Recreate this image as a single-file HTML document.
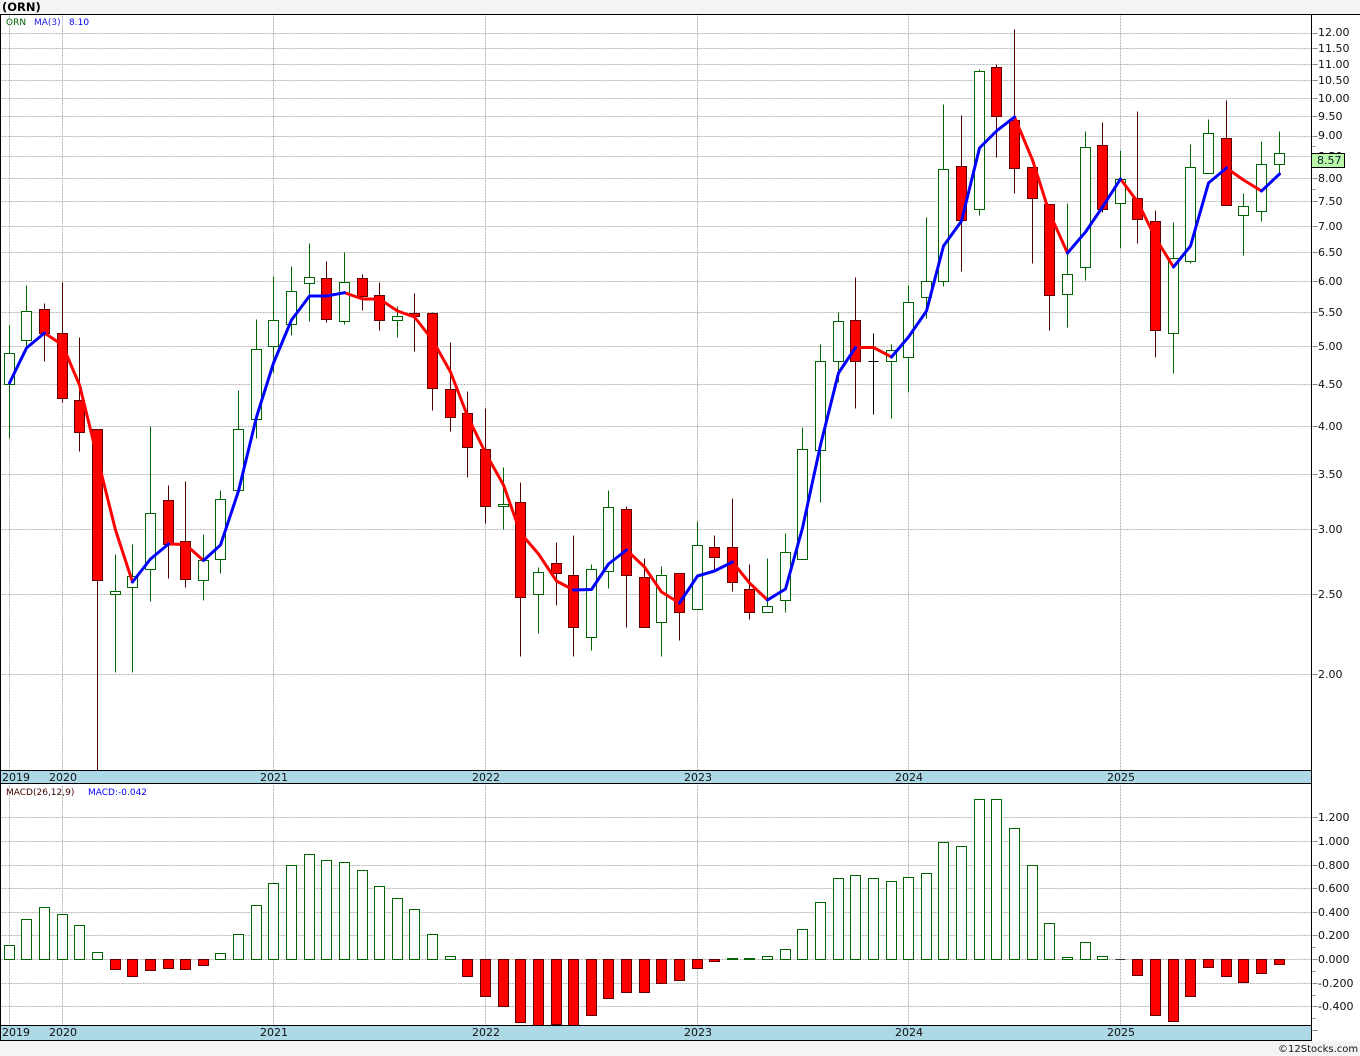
<!DOCTYPE html>
<html><head><meta charset="utf-8"><title>(ORN)</title>
<style>html,body{margin:0;padding:0;background:#f4f4f4}svg{display:block}text{font-family:"DejaVu Sans",sans-serif}</style>
</head><body>
<svg xmlns="http://www.w3.org/2000/svg" width="1360" height="1056" viewBox="0 0 1360 1056">
<rect width="1360" height="1056" fill="#f4f4f4"/>
<rect x="0" y="14" width="1360" height="1027" fill="#fff"/>
<g transform="translate(.5 .5)" fill="none" shape-rendering="crispEdges">
<path stroke="#b4b4b4" stroke-dasharray="2 1" d="M1 33H1311M1 48H1311M1 64H1311M1 80H1311M1 98H1311M1 116H1311M1 136H1311M1 156H1311M1 178H1311M1 201H1311M1 226H1311M1 252H1311M1 281H1311M1 312H1311M1 346H1311M1 384H1311M1 426H1311M1 474H1311M1 529H1311M1 594H1311M1 674H1311M1 817H1311M1 841H1311M1 865H1311M1 888H1311M1 912H1311M1 935H1311M1 959H1311M1 983H1311M1 1006H1311"/>
<path stroke="#b4b4b4" stroke-dasharray="2 1" d="M9 15V770M62 15V770M273 15V770M485 15V770M697 15V770M908 15V770M1120 15V770M9 785V1025M62 785V1025M273 785V1025M485 785V1025M697 785V1025M908 785V1025M1120 785V1025"/>
<path stroke="#888" d="M1312 33h5M1312 48h5M1312 64h5M1312 80h5M1312 98h5M1312 116h5M1312 136h5M1312 146h3M1312 178h5M1312 189h3M1312 201h5M1312 226h5M1312 252h5M1312 281h5M1312 312h5M1312 346h5M1312 384h5M1312 426h5M1312 474h5M1312 529h5M1312 594h5M1312 674h5M1312 817h5M1312 841h5M1312 865h5M1312 888h5M1312 912h5M1312 935h5M1312 947h3M1312 959h5M1312 971h3M1312 983h5M1312 995h3M1312 1006h5M1312 1018h3M1312 1030h5"/>
<path stroke="#006400" d="M9 325V438M26 285V348M115 554V672M132 544V672M150 426V601M203 534V600M220 490V573M238 390V490M256 319V438M273 276V372M291 266V335M309 243V321M344 252V324M397 306V337M503 467V529M538 567V633M591 564V650M608 490V588M661 566V656M697 521V609M767 558V612M785 533V612M802 427V559M820 344V502M838 312V382M891 344V418M908 285V392M926 217V318M943 104V286M979 69V215M1067 203V327M1085 131V280M1120 150V248M1173 222V373M1190 144V263M1208 119V173M1243 193V255M1261 141V221M1279 131V174"/>
<path stroke="#550000" d="M44 303V361M62 282V402M79 337V451M97 429V770M168 485V578M185 481V587M326 261V322M362 274V310M379 282V330M414 293V351M432 312V410M450 342V431M467 391V477M485 408V523M520 482V656M556 542V605M573 535V656M626 506V627M644 558V627M679 573V640M714 535V570M732 498V591M749 564V619M855 277V408M961 115V271M996 64V157M1014 29V193M1032 167V263M1049 204V330M1102 122V212M1137 111V243M1155 210V357M1226 100V205"/>
<path stroke="#000" d="M873 333V414M868 361h10"/>
<path stroke="#006400" fill="#fff" d="M4 353h10v31h-10zM21 311h10v29h-10zM110 591h10v3h-10zM127 576h10v11h-10zM145 513h10v56h-10zM198 560h10v20h-10zM215 499h10v60h-10zM233 429h10v61h-10zM251 349h10v70h-10zM268 320h10v26h-10zM286 291h10v33h-10zM304 277h10v6h-10zM339 282h10v39h-10zM392 316h10v4h-10zM498 504h10v2h-10zM533 572h10v22h-10zM586 569h10v68h-10zM603 507h10v64h-10zM656 575h10v47h-10zM692 545h10v64h-10zM762 606h10v6h-10zM780 552h10v48h-10zM797 449h10v110h-10zM815 361h10v89h-10zM833 321h10v40h-10zM886 350h10v11h-10zM903 302h10v55h-10zM921 281h10v16h-10zM938 169h10v112h-10zM974 71h10v138h-10zM1062 274h10v20h-10zM1080 147h10v120h-10zM1115 179h10v24h-10zM1168 258h10v75h-10zM1185 167h10v94h-10zM1203 133h10v40h-10zM1238 206h10v9h-10zM1256 164h10v47h-10zM1274 153h10v11h-10z"/>
<path stroke="#660000" fill="#f00" d="M39 309h10v24h-10zM57 333h10v65h-10zM74 400h10v32h-10zM92 429h10v151h-10zM163 500h10v44h-10zM180 541h10v38h-10zM321 278h10v41h-10zM357 278h10v18h-10zM374 295h10v25h-10zM409 313h10v3h-10zM427 313h10v75h-10zM445 389h10v28h-10zM462 413h10v34h-10zM480 449h10v57h-10zM515 502h10v95h-10zM551 563h10v10h-10zM568 575h10v52h-10zM621 509h10v66h-10zM639 577h10v50h-10zM674 573h10v39h-10zM709 547h10v10h-10zM727 547h10v35h-10zM744 589h10v23h-10zM850 320h10v41h-10zM956 166h10v54h-10zM991 67h10v49h-10zM1009 120h10v48h-10zM1027 167h10v31h-10zM1044 204h10v91h-10zM1097 145h10v64h-10zM1132 198h10v21h-10zM1150 221h10v109h-10zM1221 138h10v67h-10z"/>
<path stroke="#006400" fill="#fff" d="M4 945h10v14h-10zM21 919h10v40h-10zM39 907h10v52h-10zM57 914h10v45h-10zM74 925h10v34h-10zM92 952h10v7h-10zM215 953h10v6h-10zM233 934h10v25h-10zM251 905h10v54h-10zM268 883h10v76h-10zM286 865h10v94h-10zM304 854h10v105h-10zM321 860h10v99h-10zM339 862h10v97h-10zM357 870h10v89h-10zM374 886h10v73h-10zM392 898h10v61h-10zM409 909h10v50h-10zM427 934h10v25h-10zM445 956h10v3h-10zM762 956h10v3h-10zM780 949h10v10h-10zM797 929h10v30h-10zM815 902h10v57h-10zM833 878h10v81h-10zM850 875h10v84h-10zM868 878h10v81h-10zM886 881h10v78h-10zM903 877h10v82h-10zM921 873h10v86h-10zM938 842h10v117h-10zM956 846h10v113h-10zM974 799h10v160h-10zM991 799h10v160h-10zM1009 828h10v131h-10zM1027 865h10v94h-10zM1044 923h10v36h-10zM1062 957h10v2h-10zM1080 942h10v17h-10zM1097 956h10v3h-10zM727 958h10v1h-10zM744 958h10v1h-10z"/>
<path stroke="#333" d="M1115 959h10"/>
<path stroke="#660000" fill="#f00" d="M110 959h10v10h-10zM127 959h10v17h-10zM145 959h10v11h-10zM163 959h10v9h-10zM180 959h10v10h-10zM198 959h10v6h-10zM462 959h10v17h-10zM480 959h10v37h-10zM498 959h10v47h-10zM515 959h10v63h-10zM533 959h10v66h-10zM551 959h10v65h-10zM568 959h10v66h-10zM586 959h10v56h-10zM603 959h10v39h-10zM621 959h10v33h-10zM639 959h10v33h-10zM656 959h10v24h-10zM674 959h10v21h-10zM692 959h10v9h-10zM709 959h10v2h-10zM1132 959h10v16h-10zM1150 959h10v56h-10zM1168 959h10v62h-10zM1185 959h10v37h-10zM1203 959h10v8h-10zM1221 959h10v17h-10zM1238 959h10v23h-10zM1256 959h10v14h-10zM1274 959h10v5h-10z"/>
</g>
<g fill="none" stroke-width="3" stroke-linecap="round" stroke-linejoin="round">
<path stroke="#f00" d="M44.5 333L62.5 345L79.5 385L97.5 458L115.5 530L132.5 582M168.5 544L185.5 544.5L203.5 560.5M344.5 292.7L362.5 299L379.5 299L397.5 311L414.5 317L432.5 340L450.5 372L467.5 416L485.5 453L503.5 485L520.5 533L538.5 554L556.5 581L573.5 590M626.5 550L644.5 567L661.5 592L679.5 603M732.5 562L749.5 583L767.5 600M855.5 347.5L873.5 347.5L891.5 357M1014.5 117L1032.5 160L1049.5 213L1067.5 253M1120.5 179L1137.5 201.7L1155.5 238L1173.5 267M1226.5 168L1243.5 180L1261.5 191"/>
<path stroke="#00f" d="M9.5 383L26.5 348L44.5 333M132.5 582L150.5 559L168.5 544M203.5 560.5L220.5 545L238.5 491L256.5 417L273.5 363L291.5 320L309.5 296L326.5 296L344.5 292.7M573.5 590L591.5 589.5L608.5 564L626.5 550M679.5 603L697.5 576L714.5 571L732.5 562M767.5 600L785.5 589L802.5 528L820.5 445L838.5 373L855.5 347.5M891.5 357L908.5 337L926.5 311L943.5 246L961.5 221L979.5 148L996.5 131L1014.5 117M1067.5 253L1085.5 232L1102.5 207L1120.5 179M1173.5 267L1190.5 246L1208.5 183L1226.5 168M1261.5 191L1279.5 174"/>
</g>
<g shape-rendering="crispEdges">
<rect x="1" y="770" width="1310" height="14" fill="#add8e6"/>
<rect x="1" y="1025" width="1310" height="16" fill="#add8e6"/>
<rect x="0" y="14" width="1360" height="1" fill="#000"/>
<rect x="0" y="14" width="1" height="1027" fill="#000"/>
<rect x="1311" y="14" width="1" height="1027" fill="#000"/>
<rect x="0" y="770" width="1311" height="1" fill="#000"/>
<rect x="0" y="783" width="1311" height="1" fill="#000"/>
<rect x="0" y="1025" width="1311" height="1" fill="#000"/>
<rect x="0" y="1040" width="1312" height="1" fill="#000"/>
</g>
<g font-size="11" fill="#111">
<text x="1318" y="36">12.00</text><text x="1318" y="52">11.50</text><text x="1318" y="68">11.00</text><text x="1318" y="84">10.50</text><text x="1318" y="102">10.00</text><text x="1318" y="120">9.50</text><text x="1318" y="139">9.00</text><text x="1318" y="160">8.50</text><text x="1318" y="182">8.00</text><text x="1318" y="205">7.50</text><text x="1318" y="230">7.00</text><text x="1318" y="256">6.50</text><text x="1318" y="285">6.00</text><text x="1318" y="316">5.50</text><text x="1318" y="350">5.00</text><text x="1318" y="388">4.50</text><text x="1318" y="430">4.00</text><text x="1318" y="478">3.50</text><text x="1318" y="533">3.00</text><text x="1318" y="598">2.50</text><text x="1318" y="678">2.00</text>
<text x="1318" y="821">1.200</text><text x="1318" y="845">1.000</text><text x="1318" y="869">0.800</text><text x="1318" y="892">0.600</text><text x="1318" y="916">0.400</text><text x="1318" y="939">0.200</text><text x="1318" y="963">0.000</text><text x="1318" y="987">-0.200</text><text x="1318" y="1010">-0.400</text>
<text x="2" y="781">2019</text><text x="49" y="781">2020</text><text x="260" y="781">2021</text><text x="472" y="781">2022</text><text x="684" y="781">2023</text><text x="895" y="781">2024</text><text x="1107" y="781">2025</text>
<text x="2" y="1036">2019</text><text x="49" y="1036">2020</text><text x="260" y="1036">2021</text><text x="472" y="1036">2022</text><text x="684" y="1036">2023</text><text x="895" y="1036">2024</text><text x="1107" y="1036">2025</text>
</g>
<rect x="1311.5" y="153.5" width="33" height="14" fill="#b8f8a8" stroke="#000" shape-rendering="crispEdges"/>
<text x="1317" y="164" font-size="11" fill="#123">8.57</text>
<text x="2" y="11" font-size="11.5" font-weight="bold" fill="#000">(ORN)</text>
<g font-size="9">
<text x="6" y="25" fill="#006400">ORN</text><text x="34" y="25" fill="#2020e0">MA(3)</text><text x="69" y="25" fill="#00f">8.10</text>
<text x="6" y="795" fill="#400000">MACD(26,12,9)</text><text x="88" y="795" fill="#00f">MACD:-0.042</text>
</g>
<text x="1278" y="1052" font-size="10" fill="#111">©12Stocks.com</text>
</svg>
</body></html>
